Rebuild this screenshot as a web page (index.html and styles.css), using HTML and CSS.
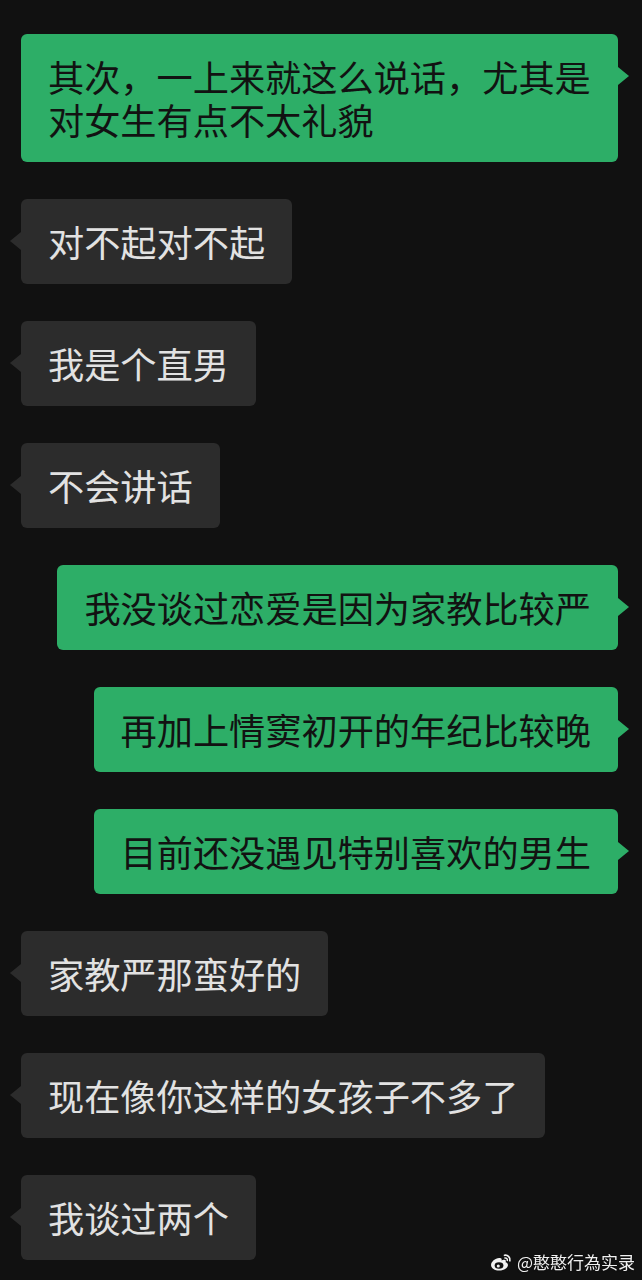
FILE: index.html
```html
<!DOCTYPE html>
<html lang="zh-CN">
<head>
    <meta charset="UTF-8" />
    <meta name="viewport" content="width=device-width, initial-scale=1.0" />
    <title>聊天记录</title>
    <link rel="stylesheet" href="styles.css">
</head>
<body>
<div class="chat">
    <div class="row me"><div class="bubble">其次，一上来就这么说话，尤其是对女生有点不太礼貌</div></div>
    <div class="row other"><div class="bubble">对不起对不起</div></div>
    <div class="row other"><div class="bubble">我是个直男</div></div>
    <div class="row other"><div class="bubble">不会讲话</div></div>
    <div class="row me"><div class="bubble">我没谈过恋爱是因为家教比较严</div></div>
    <div class="row me"><div class="bubble">再加上情窦初开的年纪比较晚</div></div>
    <div class="row me"><div class="bubble">目前还没遇见特别喜欢的男生</div></div>
    <div class="row other"><div class="bubble">家教严那蛮好的</div></div>
    <div class="row other"><div class="bubble">现在像你这样的女孩子不多了</div></div>
    <div class="row other"><div class="bubble">我谈过两个</div></div>
</div>

<!-- 水印 -->
<div class="watermark">
    <svg class="weibo" viewBox="0 0 24 20" width="23" height="19">
        <path d="M9.5 5.2C5.3 5.6 1 9 1 12.6c0 3.4 4 5.9 8.6 5.9 5.3 0 9.2-3 9.2-5.8 0-1.8-1.5-2.6-2.5-2.9.6-1.4.4-2.6-1.4-2.7-1 0-2.2.5-2.9.8.6-1.6.2-3-2.5-2.7z" fill="#f2f2f2"/>
        <ellipse cx="9.4" cy="13.2" rx="4.6" ry="3.4" fill="#111"/>
        <circle cx="8.6" cy="13.6" r="1.6" fill="#f2f2f2"/>
        <path d="M15.2 2.4c3.4-.6 6.4 2.2 5.6 5.8" stroke="#f2f2f2" stroke-width="1.8" fill="none" stroke-linecap="round"/>
        <path d="M15.6 5.2c1.6-.2 2.8 1 2.5 2.6" stroke="#f2f2f2" stroke-width="1.6" fill="none" stroke-linecap="round"/>
    </svg>
    <span>@憨憨行為实录</span>
</div>
</body>
</html>
```

FILE: styles.css
```css
html, body {
    margin: 0;
    height: 100%;
}

body {
    background-color: #111111;
    font-family: "Noto Sans CJK SC", "Noto Sans", sans-serif;
}

.chat {
    display: flex;
    flex-direction: column;
    gap: 37px;
    padding: 34px 24px 0 21px;
}

.row {
    display: flex;
}

.row.me {
    justify-content: flex-end;
}

.bubble {
    position: relative;
    max-width: 600px;
    box-sizing: border-box;
    padding: 21px 27px;
    font-size: 36.2px;
    line-height: 43px;
    border-radius: 6px;
}

.me .bubble {
    background-color: #2dae67;
    color: #121212;
}

.other .bubble {
    background-color: #2c2c2c;
    color: #e2e2e2;
}

/* colitas de los globos */
.bubble::before {
    content: "";
    position: absolute;
    top: 33px;
    border-top: 9px solid transparent;
    border-bottom: 9px solid transparent;
}

.me .bubble::before {
    right: -11px;
    border-left: 11px solid #2dae67;
}

.other .bubble::before {
    left: -11px;
    border-right: 11px solid #2c2c2c;
}

/* marca de agua */
.watermark {
    position: fixed;
    right: 7px;
    bottom: 7px;
    display: flex;
    align-items: center;
    gap: 4px;
    color: #f0f0f0;
    font-size: 17px;
    line-height: 22px;
    text-shadow: 0 0 2px rgba(0,0,0,0.6);
}
```
